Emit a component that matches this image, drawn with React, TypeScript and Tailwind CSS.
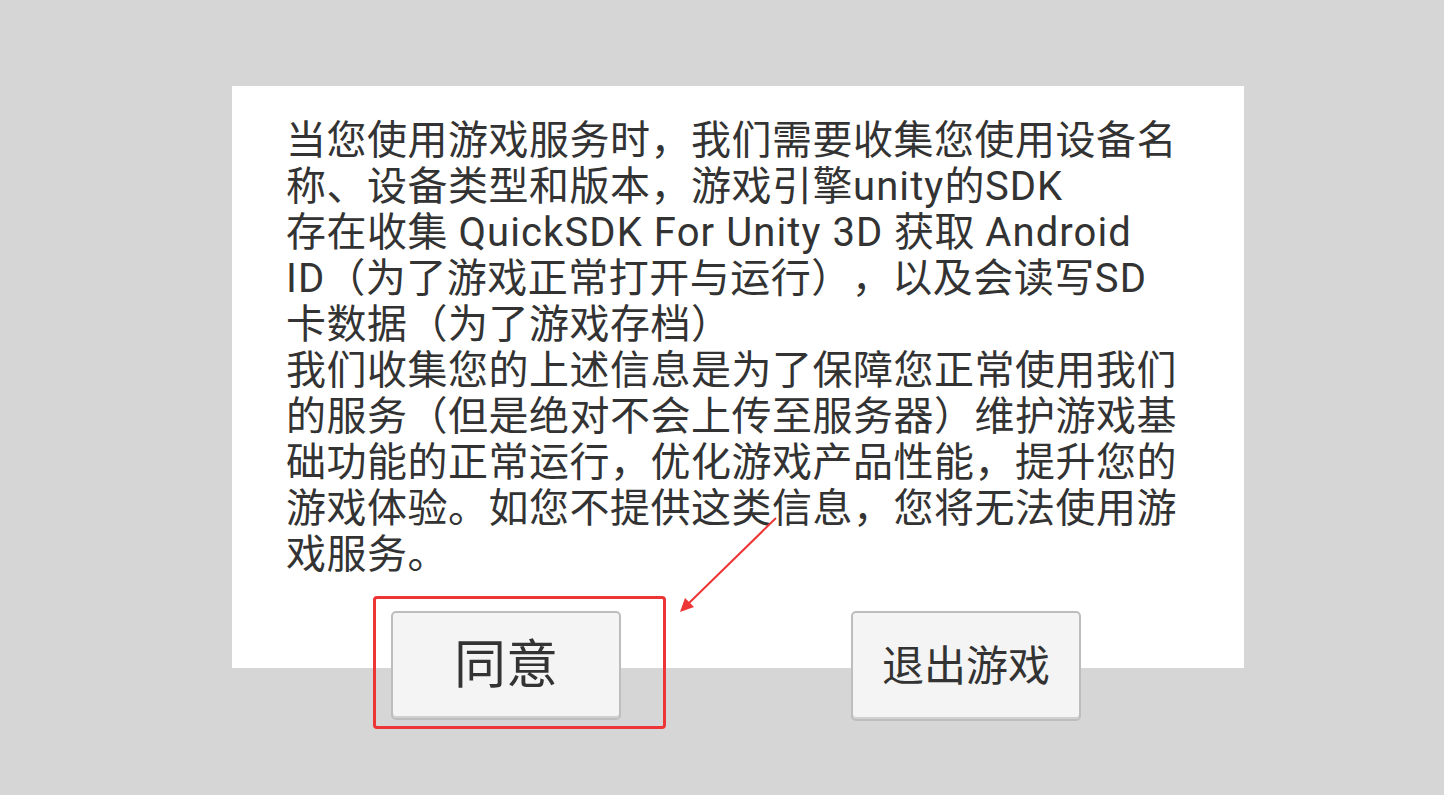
import React from "react";

const lines = [
  "当您使用游戏服务时，我们需要收集您使用设备名",
  "称、设备类型和版本，游戏引擎unity的SDK",
  "存在收集 QuickSDK For Unity 3D 获取 Android",
  "ID（为了游戏正常打开与运行），以及会读写SD",
  "卡数据（为了游戏存档）",
  "我们收集您的上述信息是为了保障您正常使用我们",
  "的服务（但是绝对不会上传至服务器）维护游戏基",
  "础功能的正常运行，优化游戏产品性能，提升您的",
  "游戏体验。如您不提供这类信息，您将无法使用游",
  "戏服务。",
];

const font = { fontFamily: "Roboto, 'Noto Sans CJK SC', sans-serif" };

// latin runs get a touch more spacing, like the device font
function Line({ text }: { text: string }) {
  const parts = text.split(/([A-Za-z0-9][A-Za-z0-9 ]*[A-Za-z0-9]|[A-Za-z0-9])/);
  return (
    <div className="whitespace-nowrap [text-spacing-trim:space-all]">
      {parts.map((p, i) =>
        /[A-Za-z0-9]/.test(p) ? (
          <span key={i} className="tracking-[1.1px]">
            {p}
          </span>
        ) : (
          <span key={i}>{p}</span>
        )
      )}
    </div>
  );
}

export default function App() {
  return (
    <div className="relative w-[1444px] h-[795px] bg-[#d6d6d6] pt-[86px] overflow-hidden" style={font}>
      {/* dialog body */}
      <div className="ml-[232px] w-[1012px] h-[582px] bg-white pl-[54px] pt-[32px]">
        <div className="text-[40px] leading-[46px] tracking-[0.5px] text-[#333333]">
          {lines.map((l, i) => (
            <Line key={i} text={l} />
          ))}
        </div>
      </div>

      {/* buttons */}
      <div className="flex -mt-[57px] ml-[391px] gap-[230px]">
        <div className="relative">
          <button className="w-[230px] h-[109px] bg-[#f4f4f4] border-2 border-[#bdbdbd] rounded-[5px] shadow-[inset_0_-2px_0_#d0d0d0] flex items-center justify-center text-[52px] text-[#333333]">
            同意
          </button>
          {/* red annotation box */}
          <div className="absolute -left-[18px] -top-[15px] w-[293px] h-[133px] border-[3px] border-[#ee3535] rounded-[4px]" />
        </div>
        <button className="w-[230px] h-[110px] bg-[#f4f4f4] border-2 border-[#bdbdbd] rounded-[5px] shadow-[inset_0_-2px_0_#d0d0d0] flex items-center justify-center text-[42px] text-[#333333]">
          退出游戏
        </button>
      </div>

      {/* arrow annotation */}
      <svg className="absolute left-0 top-0 pointer-events-none" width="1444" height="795">
        <line x1="776" y1="518" x2="688" y2="604" stroke="#ee3535" strokeWidth="2" />
        <polygon points="680,612 685,598 694,607" fill="#ee3535" />
      </svg>
    </div>
  );
}
